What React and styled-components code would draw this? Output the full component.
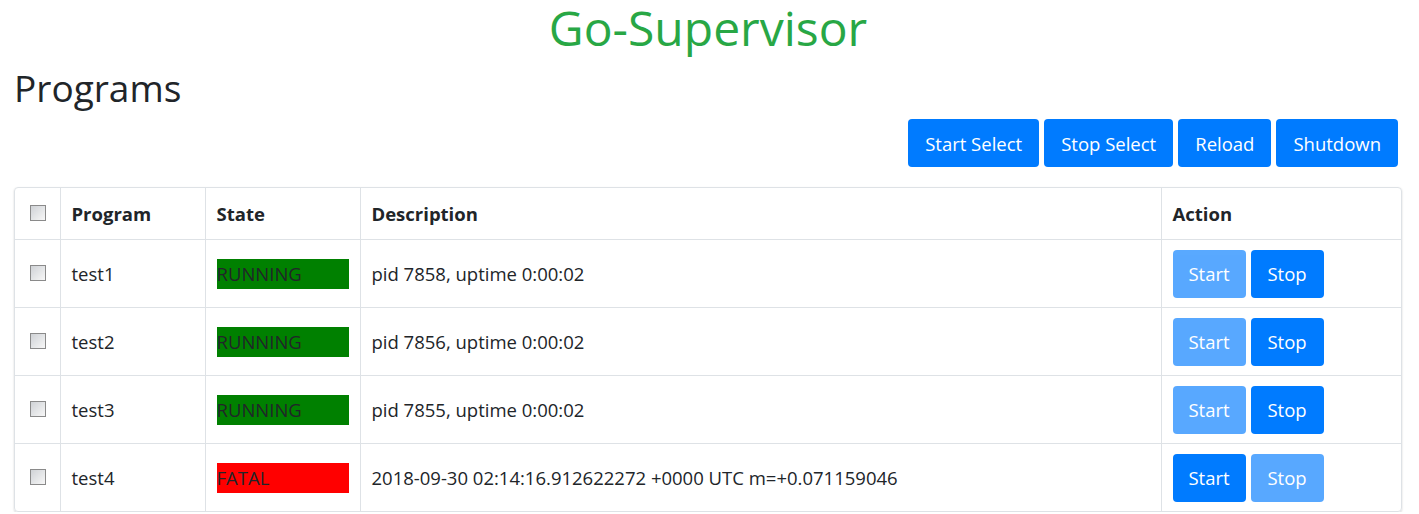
import React from 'react';
import styled, { createGlobalStyle } from 'styled-components';

const programs = [
  { name: 'test1', state: 'RUNNING', description: 'pid 7858, uptime 0:00:02', running: true },
  { name: 'test2', state: 'RUNNING', description: 'pid 7856, uptime 0:00:02', running: true },
  { name: 'test3', state: 'RUNNING', description: 'pid 7855, uptime 0:00:02', running: true },
  {
    name: 'test4',
    state: 'FATAL',
    description: '2018-09-30 02:14:16.912622272 +0000 UTC m=+0.071159046',
    running: false,
  },
];

const GlobalStyle = createGlobalStyle`
  body {
    margin: 0;
    background: #fff;
    color: #212529;
    font-family: "Open Sans", "Noto Sans", sans-serif;
  }
`;

const Page = styled.div`
  padding: 0 17px 0 14px;
`;

const Title = styled.h1`
  margin: 0;
  text-align: center;
  color: #28a745;
  font-size: 48px;
  font-weight: 400;
  line-height: 56px;
`;

const Heading = styled.h2`
  margin: 8px 0 0;
  font-size: 37px;
  font-weight: 400;
  line-height: 48px;
`;

const Toolbar = styled.div`
  display: flex;
  justify-content: flex-end;
  gap: 5px;
  margin-top: 7px;
  padding-right: 4px;
`;

const Button = styled.button`
  height: 48px;
  padding: 0 17px;
  border: none;
  border-radius: 4px;
  background: #007bff;
  color: #fff;
  font-family: inherit;
  font-size: 18.5px;
  opacity: ${p => (p.disabled ? 0.65 : 1)};
`;

const TableBox = styled.div`
  margin-top: 20px;
  border: 1px solid #dee2e6;
  border-radius: 4px;
  box-shadow: 0 1px 2px rgba(0, 0, 0, 0.18);
  overflow: hidden;
`;

const Table = styled.table`
  width: 100%;
  table-layout: fixed;
  border-collapse: collapse;
  font-size: 18.5px;
`;

const Th = styled.th`
  text-align: left;
  font-weight: 700;
  height: 51px;
  padding: 0 11px;
  border-left: 1px solid #dee2e6;
  &:first-child {
    border-left: none;
    padding: 0;
  }
`;

const Td = styled.td`
  height: 67px;
  padding: 0 11px;
  border-top: 1px solid #dee2e6;
  border-left: 1px solid #dee2e6;
  vertical-align: middle;
  &:first-child {
    border-left: none;
    padding: 0;
  }
`;

const Check = styled.input.attrs({ type: 'checkbox' })`
  appearance: none;
  width: 16px;
  height: 16px;
  display: block;
  margin: -2px auto 0 15px;
  border: 1px solid #8a8a8a;
  background: linear-gradient(135deg, #cfd2d6, #f7f7f7);
`;

const StateBadge = styled.div`
  height: 30px;
  line-height: 30px;
  background: ${p => (p.ok ? '#008000' : '#ff0000')};
  color: #212529;
`;

const Actions = styled.div`
  display: flex;
  gap: 5px;
  & > button {
    width: 73px;
    padding: 0;
  }
`;

export default function App() {
  return (
    <Page>
      <GlobalStyle />
      <Title>Go-Supervisor</Title>
      <Heading>Programs</Heading>
      <Toolbar>
        <Button>Start Select</Button>
        <Button>Stop Select</Button>
        <Button>Reload</Button>
        <Button>Shutdown</Button>
      </Toolbar>
      <TableBox>
        <Table>
          <colgroup>
            <col style={{ width: 45 }} />
            <col style={{ width: 145 }} />
            <col style={{ width: 155 }} />
            <col />
            <col style={{ width: 240 }} />
          </colgroup>
          <thead>
            <tr>
              <Th>
                <Check />
              </Th>
              <Th>Program</Th>
              <Th>State</Th>
              <Th>Description</Th>
              <Th>Action</Th>
            </tr>
          </thead>
          <tbody>
            {programs.map(p => (
              <tr key={p.name}>
                <Td>
                  <Check />
                </Td>
                <Td>{p.name}</Td>
                <Td>
                  <StateBadge ok={p.running}>{p.state}</StateBadge>
                </Td>
                <Td>{p.description}</Td>
                <Td>
                  <Actions>
                    <Button disabled={p.running}>Start</Button>
                    <Button disabled={!p.running}>Stop</Button>
                  </Actions>
                </Td>
              </tr>
            ))}
          </tbody>
        </Table>
      </TableBox>
    </Page>
  );
}
